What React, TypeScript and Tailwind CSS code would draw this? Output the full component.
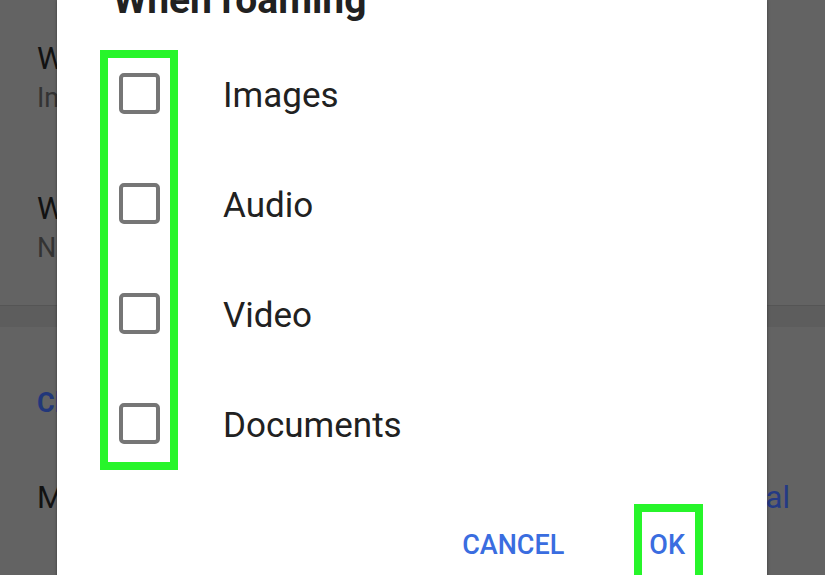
import React from "react";

const rows = ["Images", "Audio", "Video", "Documents"];

function SettingItem({ title, sub }: { title: string; sub: string }) {
  return (
    <div className="h-[150px] pt-[41px] pl-[37px] flex flex-col gap-[5px]">
      <div className="text-[31px] leading-[36px] text-[#121212]">{title}</div>
      <div className="text-[27px] leading-[32px] text-[#333333]">{sub}</div>
    </div>
  );
}

export default function App() {
  return (
    <div className="relative w-[825px] h-[575px] overflow-hidden bg-[#636363] font-['Roboto','Liberation_Sans',sans-serif]">
      {/* dimmed page underneath */}
      <div className="flex flex-col">
        <SettingItem title="When using mobile data" sub="Images" />
        <SettingItem title="When connected on Wi-Fi" sub="No media" />
        <div className="h-[5px]" />
        <div className="h-[22px] bg-[#5d5d5d] border-t border-[#555555]" />
        <div className="pl-[37px] pt-[60px] text-[27px] leading-[32px] font-bold text-[#22377a]">
          Cloud settings
        </div>
        <div className="flex items-center justify-between pl-[37px] pr-[35px] mt-[61px] text-[31px] leading-[36px]">
          <span className="text-[#121212]">Media upload quality</span>
          <span className="text-[#243a85]">Normal</span>
        </div>
      </div>

      {/* dialog */}
      <div className="absolute top-0 left-[57px] w-[710px] h-[600px] bg-white flex flex-col shadow-[0_0_3px_rgba(0,0,0,0.4)]">
        <div className="mt-[-23px] pl-[56px] text-[39px] leading-[46px] font-bold text-[#212121]">
          When roaming
        </div>
        <div className="relative mt-[15px] flex flex-col">
          {rows.map((r) => (
            <div key={r} className="h-[110px] flex items-center pl-[62px]">
              <div className="w-[41px] h-[41px] border-[4px] border-[#767676] rounded-[5px]" />
              <div className="ml-[63px] mt-[5px] text-[35px] leading-[41px] text-[#212121]">{r}</div>
            </div>
          ))}
          <div className="absolute left-[43px] top-[12px] w-[78px] h-[420px] border-[8px] border-[#27f52a]" />
        </div>
        <div className="mt-[26px] flex justify-end items-start pr-[64px]">
          <div className="mt-[25px] text-[27px] leading-[32px] font-medium text-[#3a6de0]">CANCEL</div>
          <div className="ml-[70px] h-[120px] border-[8px] border-[#27f52a] pl-[7px] pr-[10px] pt-[17px] text-[27px] leading-[32px] font-medium text-[#3a6de0]">
            OK
          </div>
        </div>
      </div>
    </div>
  );
}
